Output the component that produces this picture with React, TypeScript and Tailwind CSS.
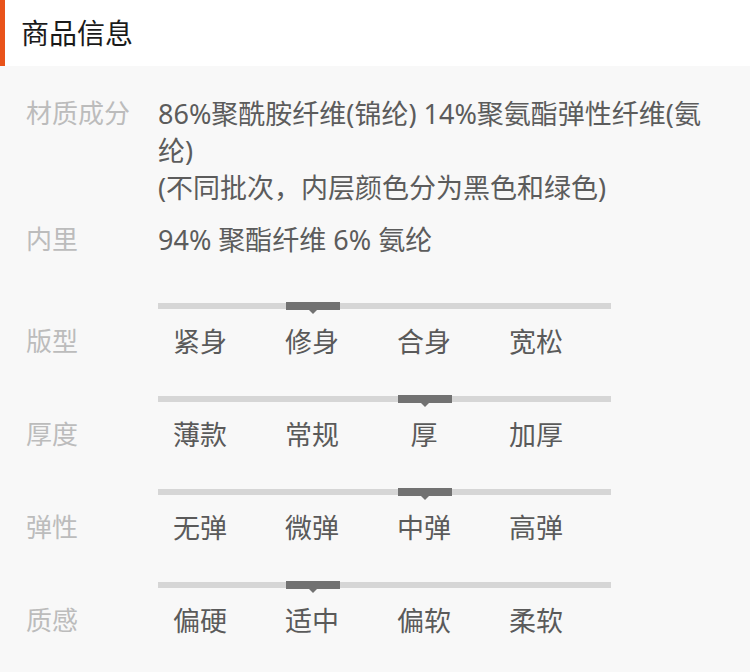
import React from "react"

const font = { fontFamily: '"Noto Sans", "Noto Sans CJK SC", sans-serif' }

const specs = [
  { label: "版型", options: ["紧身", "修身", "合身", "宽松"], active: 1 },
  { label: "厚度", options: ["薄款", "常规", "厚", "加厚"], active: 2 },
  { label: "弹性", options: ["无弹", "微弹", "中弹", "高弹"], active: 2 },
  { label: "质感", options: ["偏硬", "适中", "偏软", "柔软"], active: 1 },
]

function InfoRow({ label, children }: { label: string; children: React.ReactNode }) {
  return (
    <div className="flex">
      <div className="w-[132px] shrink-0 text-[26px] text-[#bcbcbc]">{label}</div>
      <div className="flex-1 text-[#5c5c5c]">{children}</div>
    </div>
  )
}

function ScaleRow({ label, options, active }: { label: string; options: string[]; active: number }) {
  return (
    <div className="flex items-end">
      <div className="w-[132px] shrink-0 text-[26px] text-[#bcbcbc]">{label}</div>
      <div className="w-[453px]">
        {/* 滑轨 */}
        <div className="relative h-[6px] bg-[#d6d6d6]">
          <div
            className="absolute top-[-1px] h-[8px] w-[54px] bg-[#727272]"
            style={{ left: 16 + active * 112 }}
          >
            <div className="absolute left-1/2 top-[7px] -translate-x-1/2 border-x-[5px] border-t-[5px] border-x-transparent border-t-[#727272]" />
          </div>
        </div>
        <div className="mt-[14px] flex gap-[58px] pl-[15px] text-[#5a5a5a]">
          {options.map((o) => (
            <div key={o} className="w-[54px] text-center">
              {o}
            </div>
          ))}
        </div>
      </div>
    </div>
  )
}

export default function App() {
  return (
    <div className="min-h-[672px] w-[750px] bg-[#f8f8f8]" style={font}>
      <div className="flex h-[66px] items-center border-l-[5px] border-[#e9531a] bg-white pl-[16px] text-[28px] text-[#1a1a1a]">
        商品信息
      </div>

      <div className="pl-[26px] pr-[24px] pt-[29px] text-[27px] leading-[37px]">
        <InfoRow label="材质成分">
          86%聚酰胺纤维(锦纶) 14%聚氨酯弹性纤维(氨纶)
          <br />
          (不同批次，内层颜色分为黑色和绿色)
        </InfoRow>
        <div className="mt-[15px]">
          <InfoRow label="内里">94% 聚酯纤维 6% 氨纶</InfoRow>
        </div>

        <div className="mt-[45px] space-y-[36px]">
          {specs.map((s) => (
            <ScaleRow key={s.label} {...s} />
          ))}
        </div>
      </div>
    </div>
  )
}
